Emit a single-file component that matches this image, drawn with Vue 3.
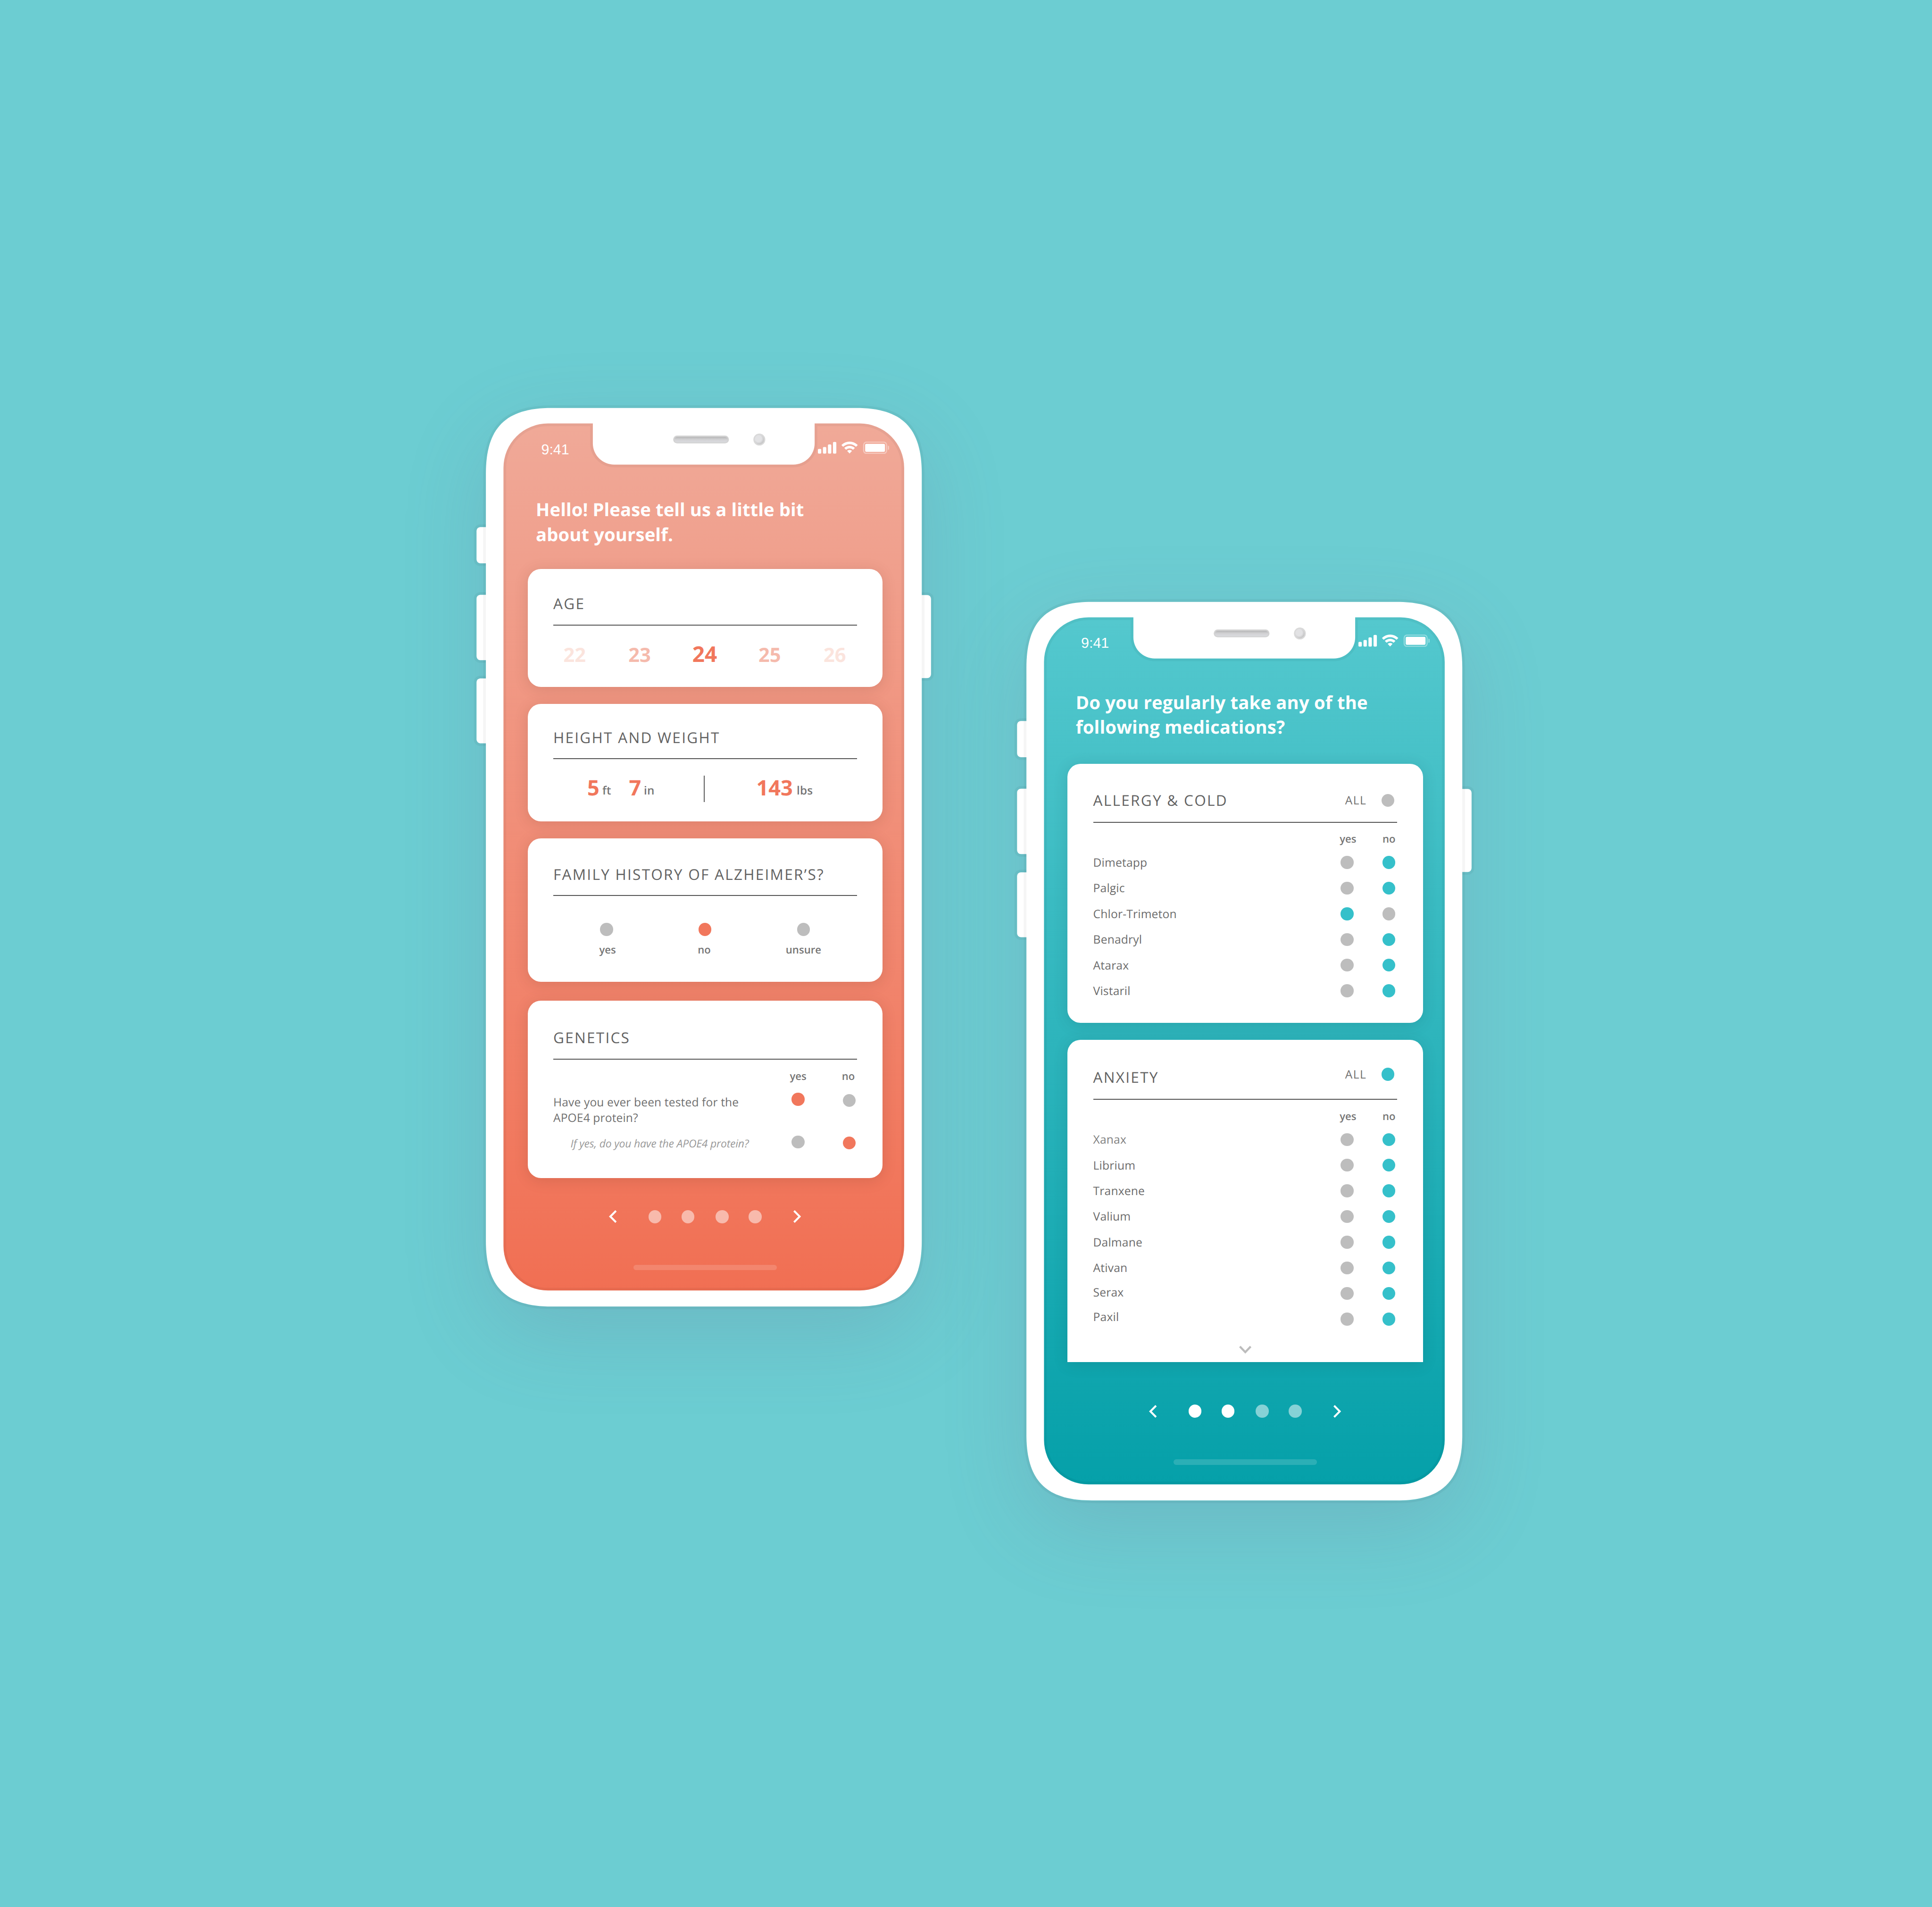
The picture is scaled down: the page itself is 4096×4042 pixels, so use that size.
<script setup>
const pager = { one: [false, false, false, false], two: [true, true, false, false] }

const ages = [
  { value: 22, cls: 'far' },
  { value: 23, cls: 'near' },
  { value: 24, cls: 'current' },
  { value: 25, cls: 'near' },
  { value: 26, cls: 'far' }
]

const history = [
  { label: 'yes', on: false },
  { label: 'no', on: true },
  { label: 'unsure', on: false }
]

const allergy = [
  { name: 'Dimetapp', yes: false },
  { name: 'Palgic', yes: false },
  { name: 'Chlor-Trimeton', yes: true },
  { name: 'Benadryl', yes: false },
  { name: 'Atarax', yes: false },
  { name: 'Vistaril', yes: false }
]

const anxiety = ['Xanax', 'Librium', 'Tranxene', 'Valium', 'Dalmane', 'Ativan', 'Serax', 'Paxil']

const phones = [
  { id: 'one', title: ['Hello! Please tell us a little bit', 'about yourself.'], from: '#f0a998', to: '#f16f53' },
  { id: 'two', title: ['Do you regularly take any of the', 'following medications?'], from: '#54c8ce', to: '#05a0a9' }
]

const bodyPath =
  'M1258 1225.5C1258 1106.5 1309 1055.5 1428 1055.5H2216C2335 1055.5 2386 1106.5 2386 1225.5V3210.5C2386 3329.5 2335 3380.5 2216 3380.5H1428C1309 3380.5 1258 3329.5 1258 3210.5Z'
const screenPath =
  'M1418.5 1095.5H1534.8V1147A55 55 0 0 0 1589.8 1202H2053.8A55 55 0 0 0 2108.8 1147V1095.5H2225.5A115 115 0 0 1 2340.5 1210.5V3224A115 115 0 0 1 2225.5 3339H1418.5A115 115 0 0 1 1303.5 3224V1210.5A115 115 0 0 1 1418.5 1095.5Z'
const buttons = [
  { x: 1233.8, y: 1363.7, w: 60, h: 93.7 },
  { x: 1233.8, y: 1538.9, w: 60, h: 169.2 },
  { x: 1233.8, y: 1755.2, w: 60, h: 168 },
  { x: 2350, y: 1539.5, w: 60, h: 215 }
]
</script>

<template>
  <main class="stage">
    <section v-for="phone in phones" :key="phone.id" class="phone" :class="phone.id">
      <div class="drop"></div>
      <svg class="frame" viewBox="1220 1040 1204 2360" aria-hidden="true">
        <defs>
          <linearGradient :id="'bg-' + phone.id" x1="0" y1="0" x2="0" y2="1">
            <stop offset="0" :stop-color="phone.from" />
            <stop offset="1" :stop-color="phone.to" />
          </linearGradient>
          <linearGradient :id="'sp-' + phone.id" x1="0" y1="0" x2="0" y2="1">
            <stop offset="0" stop-color="#b6b6b7" />
            <stop offset="0.5" stop-color="#d2d2d4" />
            <stop offset="1" stop-color="#d9dade" />
          </linearGradient>
          <radialGradient :id="'cam-' + phone.id" cx="0.4" cy="0.4" r="0.62">
            <stop offset="0.55" stop-color="#e2e2e4" />
            <stop offset="1" stop-color="#c3c3c4" />
          </radialGradient>
          <clipPath :id="'clip-' + phone.id"><path :d="screenPath" /></clipPath>
        </defs>
        <g v-for="b in buttons" :key="b.x + '-' + b.y">
          <rect :x="b.x - 3.5" :y="b.y - 3.5" :width="b.w + 7" :height="b.h + 7" rx="13" class="ring" />
          <rect :x="b.x" :y="b.y" :width="b.w" :height="b.h" rx="10" fill="#fff" />
        </g>
        <path :d="bodyPath" fill="none" stroke="#000" stroke-opacity="0.04" stroke-width="14" />
        <path :d="bodyPath" fill="#fff" />
        <path :d="screenPath" :fill="`url(#bg-${phone.id})`" />
        <path
          :d="screenPath"
          fill="none"
          stroke="#000"
          stroke-opacity="0.04"
          stroke-width="14"
          :clip-path="`url(#clip-${phone.id})`"
        />
        <rect x="1742.7" y="1127" width="144.3" height="20" rx="10" fill="#d2d2d2" />
        <rect x="1745.8" y="1130.3" width="138.4" height="14.2" rx="7.1" :fill="`url(#sp-${phone.id})`" />
        <circle cx="1965.7" cy="1137.3" r="15.4" fill="#d9d9d9" />
        <circle cx="1965.7" cy="1137.3" r="12.2" :fill="`url(#cam-${phone.id})`" />
      </svg>

      <div class="screen">
        <div class="status">
          <span class="time">9:41</span>
          <svg class="indicators" viewBox="0 0 184 32" aria-hidden="true">
            <g fill="#fff">
              <rect x="0" y="19" width="8.7" height="12" rx="2.4" />
              <rect x="13" y="14" width="8.7" height="17" rx="2.4" />
              <rect x="26" y="7.3" width="8.7" height="23.7" rx="2.4" />
              <rect x="39" y="1" width="8.7" height="30" rx="2.4" />
              <path d="M60.8 8.8Q70.2 0 82 0T103.2 8.8L98.8 13.4Q91.5 6.6 82 6.6T65.2 13.4Z" />
              <path d="M68.3 16.5Q74.2 10.9 82 10.9T95.7 16.5L91.1 21.1Q87.4 17.4 82 17.4T72.9 21.1Z" />
              <path d="M75.7 24.1Q78.2 21.6 82 21.6T88.3 24.1L82 30.7Z" />
              <rect x="122.3" y="5.7" width="51.4" height="20.8" rx="3.4" />
            </g>
            <rect x="118.4" y="1.4" width="59.4" height="29.2" rx="7.5" fill="none" stroke="#fff" stroke-opacity="0.38" stroke-width="3" />
            <path d="M181 10.5a5.6 5.6 0 0 1 0 11z" fill="#fff" fill-opacity="0.38" />
          </svg>
        </div>

        <div class="content">
          <h1 class="title">
            <span v-for="line in phone.title" :key="line">{{ line }}</span>
          </h1>

          <template v-if="phone.id === 'one'">
            <article class="card age">
              <h2>AGE</h2>
              <div class="ages">
                <span v-for="a in ages" :key="a.value" :class="a.cls">{{ a.value }}</span>
              </div>
            </article>

            <article class="card body">
              <h2>HEIGHT AND WEIGHT</h2>
              <div class="measures">
                <b>5</b><em>ft</em><b>7</b><em>in</em><i class="divider"></i><b>143</b><em>lbs</em>
              </div>
            </article>

            <article class="card family">
              <h2>FAMILY HISTORY OF ALZHEIMER’S?</h2>
              <div class="options">
                <div v-for="o in history" :key="o.label" class="option" :class="o.label">
                  <i class="dot" :class="{ on: o.on }"></i>
                  <span class="label">{{ o.label }}</span>
                </div>
              </div>
            </article>

            <article class="card genetics">
              <h2>GENETICS</h2>
              <div class="qrow head">
                <span></span><span class="label">yes</span><span class="label">no</span>
              </div>
              <div class="qrow first">
                <p>Have you ever been tested for the<br />APOE4 protein?</p>
                <i class="dot on"></i><i class="dot low"></i>
              </div>
              <div class="qrow second">
                <p>If yes, do you have the APOE4 protein?</p>
                <i class="dot"></i><i class="dot on low"></i>
              </div>
            </article>
          </template>

          <template v-else>
            <article class="card allergy">
              <header>
                <h2>ALLERGY &amp; COLD</h2>
                <div class="all"><span>ALL</span><i class="dot"></i></div>
              </header>
              <div class="mrow head">
                <span></span><span class="label">yes</span><span class="label">no</span>
              </div>
              <div v-for="m in allergy" :key="m.name" class="mrow">
                <span>{{ m.name }}</span>
                <i class="dot" :class="{ on: m.yes }"></i>
                <i class="dot" :class="{ on: !m.yes }"></i>
              </div>
            </article>

            <article class="card anxiety">
              <header>
                <h2>ANXIETY</h2>
                <div class="all"><span>ALL</span><i class="dot on"></i></div>
              </header>
              <div class="mrow head">
                <span></span><span class="label">yes</span><span class="label">no</span>
              </div>
              <div v-for="m in anxiety" :key="m" class="mrow" :class="m.toLowerCase()">
                <span>{{ m }}</span>
                <i class="dot"></i>
                <i class="dot on"></i>
              </div>
              <svg class="more" viewBox="0 0 32 21" aria-hidden="true">
                <path d="M2 2.5 16 17 30 2.5" fill="none" stroke="#bcbcbc" stroke-width="5.4" />
              </svg>
            </article>
          </template>

          <nav class="pager">
            <svg viewBox="0 0 20 33" aria-hidden="true">
              <path d="M18.2 1.8 3.6 16.5 18.2 31.2" fill="none" stroke="#fff" stroke-width="5" />
            </svg>
            <div class="pages">
              <i v-for="(on, n) in pager[phone.id]" :key="n" class="page" :class="{ seen: on }"></i>
            </div>
            <svg viewBox="0 0 20 33" aria-hidden="true">
              <path d="M1.8 1.8 16.4 16.5 1.8 31.2" fill="none" stroke="#fff" stroke-width="5" />
            </svg>
          </nav>
          <div class="home"></div>
        </div>
      </div>
    </section>
  </main>
</template>

<style>
/* 1rem = 100 design units */
html {
  font-size: 81.92px;
}
body {
  margin: 0;
  background: #6ccdd2;
}
</style>

<style scoped>
.stage {
  position: relative;
  width: 4096px;
  height: 4042px;
  overflow: hidden;
  background: #6ccdd2;
  font-family: 'Open Sans', 'Noto Sans', sans-serif;
  text-rendering: geometricPrecision;
}
h1,
h2,
p {
  margin: 0;
  font-weight: 400;
}
.phone {
  position: absolute;
  left: 12.2rem;
  top: 10.4rem;
  width: 12.04rem;
  height: 23.6rem;
  --accent: #f1775c;
}
.phone.two {
  left: 26.178rem;
  top: 15.42rem;
  --accent: #35c0ca;
}
.drop {
  position: absolute;
  left: 0.38rem;
  top: 0.155rem;
  width: 11.28rem;
  height: 23.25rem;
  border-radius: 1.5rem;
  box-shadow: 0 0.68rem 2.1rem rgba(108, 116, 146, 0.22);
}
.frame {
  position: absolute;
  inset: 0;
  width: 100%;
  height: 100%;
}
.ring {
  fill: none;
  stroke: #000;
  stroke-opacity: 0.04;
  stroke-width: 7;
}
.screen {
  position: relative;
  margin: 0.557rem 0 0 0.835rem;
  width: 10.37rem;
  height: 22.435rem;
}

.status {
  box-sizing: border-box;
  height: 1.25rem;
  padding: 0 0.392rem 0 0.972rem;
  display: flex;
  align-items: center;
  justify-content: space-between;
}
.two .status {
  height: 1.21rem;
  padding: 0 0.385rem 0 0.966rem;
}
.time {
  padding-top: 0.114rem;
  font: 400 0.372rem/0.5rem 'Liberation Sans', Arial, sans-serif;
  color: #fff;
}
.indicators {
  width: 1.84rem;
  height: 0.32rem;
}

.content {
  padding: 0 0.566rem 0 0.62rem;
}
.two .content {
  padding: 0 0.554rem 0 0.606rem;
}
.title {
  margin: 0.664rem 0 0.577rem 0.214rem;
  font-size: 0.467rem;
  line-height: 0.64rem;
  font-weight: 700;
  letter-spacing: 0.001rem;
  color: #fff;
  white-space: nowrap;
}
.two .title {
  margin: 0.671rem 0 0.627rem 0.222rem;
  letter-spacing: 0.0022rem;
}
.title span {
  display: block;
}

.card {
  box-sizing: border-box;
  padding: 0 0.664rem;
  border-radius: 0.34rem;
  background: #fff;
  box-shadow: 0 0.06rem 0.36rem rgba(90, 40, 30, 0.15);
}
.two .card {
  padding: 0 0.672rem;
  box-shadow: 0 0.06rem 0.36rem rgba(0, 60, 70, 0.15);
}
h2 {
  font-size: 0.385rem;
  line-height: 0.6rem;
  letter-spacing: 0.0278rem;
  color: #626262;
  white-space: nowrap;
}
.one h2 {
  border-bottom: 0.03rem solid #555;
}
.label {
  font-size: 0.27rem;
  line-height: 0.4rem;
  font-weight: 600;
  color: #757575;
}
.dot {
  display: block;
  width: 0.334rem;
  height: 0.334rem;
  border-radius: 50%;
  background: #bdbdbd;
}
.dot.on {
  background: var(--accent);
}

.age {
  height: 3.044rem;
  margin-bottom: 0.441rem;
}
.age h2 {
  padding: 0.594rem 0 0.245rem;
}
.ages {
  display: grid;
  grid-template-columns: repeat(5, 1.683rem);
  justify-content: center;
  align-items: baseline;
  height: 0.8rem;
  margin: 0.337rem 0.01rem 0 -0.01rem;
  font-size: 0.508rem;
  line-height: 0.8rem;
  font-weight: 700;
  text-align: center;
}
.far {
  color: #fbe4dd;
}
.near {
  color: #f5baac;
}
.current {
  font-size: 0.56rem;
  color: var(--accent);
}

.body {
  height: 3.045rem;
  margin-bottom: 0.437rem;
}
.body h2 {
  padding: 0.571rem 0 0.239rem;
}
.measures {
  display: grid;
  grid-template-columns: 0.39rem 0.69rem 0.385rem 1.55rem 1.36rem 1.045rem auto;
  align-items: baseline;
  height: 0.8rem;
  margin: 0.336rem 0 0 0.88rem;
  line-height: 0.8rem;
}
.measures b {
  font-size: 0.55rem;
  font-weight: 700;
  color: var(--accent);
}
.measures em {
  font-size: 0.296rem;
  font-style: normal;
  font-weight: 600;
  letter-spacing: 0.003rem;
  color: #757575;
  transform: translateY(-0.03rem);
}
.divider {
  align-self: start;
  width: 0.03rem;
  height: 0.685rem;
  margin-top: 0.087rem;
  background: #5c5c5c;
}

.family {
  height: 3.707rem;
  margin-bottom: 0.496rem;
}
.family h2 {
  padding: 0.628rem 0 0.239rem;
}
.options {
  display: grid;
  grid-template-columns: repeat(3, 2.547rem);
  justify-content: center;
  margin-top: 0.695rem;
}
.option {
  display: flex;
  flex-direction: column;
  align-items: center;
  gap: 0.165rem;
}
.option.yes .label {
  padding-left: 0.05rem;
}
.option.no .label {
  padding-right: 0.045rem;
}

.genetics {
  height: 4.59rem;
}
.genetics h2 {
  padding: 0.653rem 0 0.237rem;
}
.qrow {
  display: grid;
  grid-template-columns: 1fr 0.4rem 0.4rem;
  column-gap: 0.92rem;
  justify-items: center;
  align-items: start;
}
.qrow.head {
  margin-top: 0.239rem;
}
.qrow.head .label:last-child {
  padding-right: 0.04rem;
}
.qrow p {
  justify-self: start;
  white-space: nowrap;
}
.qrow .low {
  margin-top: 0.028rem;
}
.first {
  height: 0.845rem;
  margin-top: 0.225rem;
}
.first p {
  padding-top: 0.045rem;
  font-size: 0.3rem;
  line-height: 0.405rem;
  letter-spacing: 0.0018rem;
  color: #707070;
}
.second {
  margin-top: 0.258rem;
}
.second p {
  padding: 0.01rem 0 0 0.445rem;
  font-size: 0.28rem;
  line-height: 0.4rem;
  letter-spacing: -0.0024rem;
  font-style: italic;
  color: #9a9a9a;
}

.card header {
  display: flex;
  justify-content: space-between;
  align-items: flex-start;
  border-bottom: 0.03rem solid #555;
}
.all {
  display: flex;
  align-items: center;
  gap: 0.385rem;
  height: 0.6rem;
  padding-right: 0.07rem;
  font-size: 0.3rem;
  letter-spacing: 0.018rem;
  color: #707070;
}
.allergy {
  height: 6.699rem;
  margin-bottom: 0.442rem;
}
.allergy header {
  padding: 0.642rem 0 0.255rem;
}
.mrow {
  display: grid;
  grid-template-columns: 1fr 0.432rem 0.432rem;
  column-gap: 0.646rem;
  align-items: center;
  justify-items: center;
  height: 0.6645rem;
  font-size: 0.3rem;
  color: #6c6c6c;
}
.mrow > span:first-child {
  justify-self: start;
  padding-top: 0.01rem;
  letter-spacing: 0.0025rem;
}
.mrow.head {
  height: 0.4rem;
  margin: 0.226rem 0 0.071rem;
}
.mrow.head .label:nth-child(2) {
  padding-left: 0.045rem;
}
.mrow.head .label:nth-child(3) {
  padding-left: 0.01rem;
}
.card.anxiety {
  height: 8.334rem;
  border-radius: 0.34rem 0.34rem 0 0;
}
.anxiety header {
  padding: 0.669rem 0 0.254rem;
}
.anxiety .all {
  height: 0.445rem;
}
.anxiety .mrow.head {
  margin: 0.235rem 0 0.063rem;
}
.mrow.xanax {
  color: #808080;
}
.mrow.serax > span {
  margin-bottom: 0.06rem;
}
.mrow.paxil > span {
  margin-bottom: 0.12rem;
}
.more {
  display: block;
  width: 0.32rem;
  height: 0.21rem;
  margin: 0.353rem auto 0;
}

.pager {
  display: flex;
  justify-content: center;
  align-items: center;
  gap: 0.82rem;
  height: 0.34rem;
  margin-top: 0.825rem;
}
.two .pager {
  margin-top: 1.104rem;
}
.pager svg {
  width: 0.2rem;
  height: 0.33rem;
}
.pages {
  display: flex;
  gap: 0.522rem;
}
.page {
  width: 0.334rem;
  height: 0.334rem;
  border-radius: 50%;
  background: rgba(255, 255, 255, 0.5);
}
.page:nth-child(3) {
  margin-left: 0.03rem;
}
.page.seen {
  background: #fff;
}
.home {
  width: 3.706rem;
  height: 0.142rem;
  margin: 1.073rem auto 0;
  border-radius: 0.07rem;
  background: rgba(255, 255, 255, 0.15);
}
.two .home {
  margin-top: 1.075rem;
}
</style>
